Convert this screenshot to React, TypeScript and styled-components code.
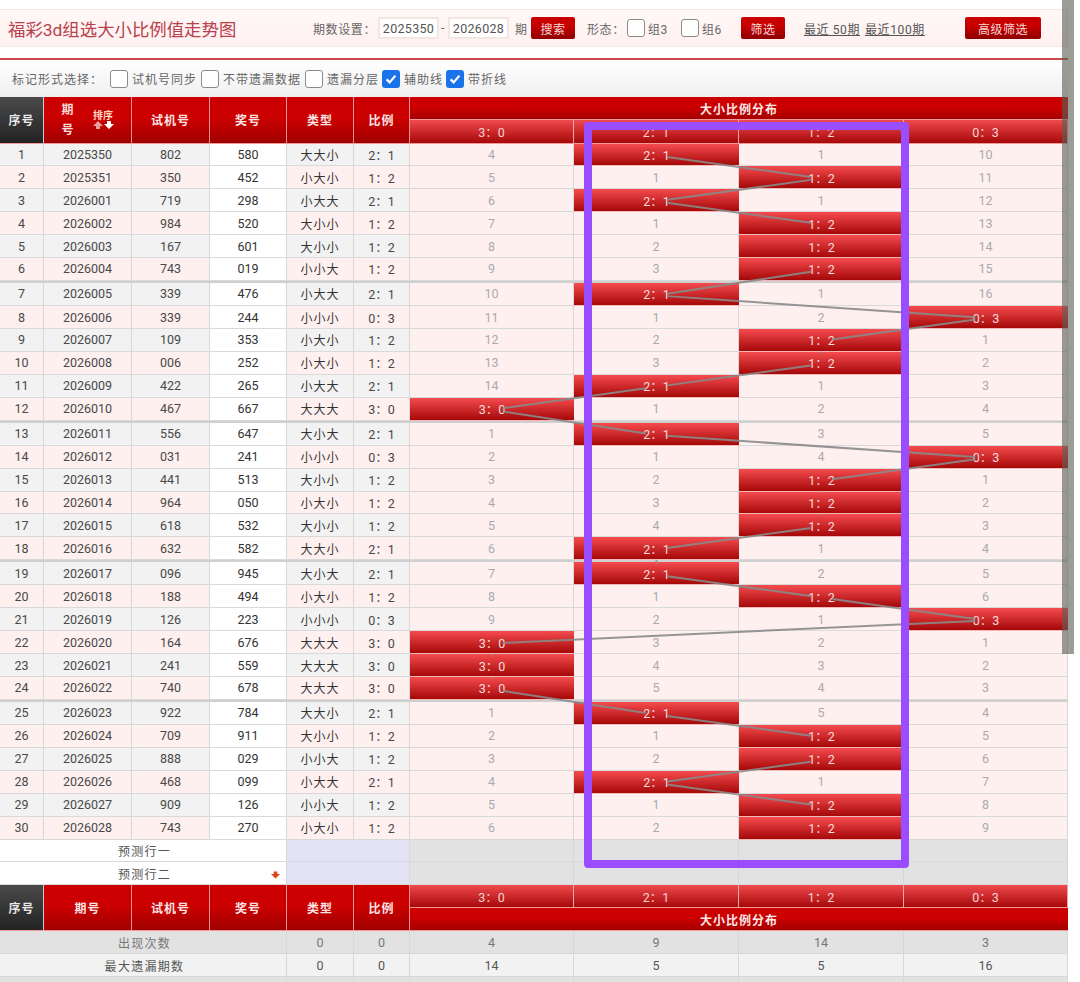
import React from "react";
import styled, { createGlobalStyle, css } from "styled-components";

const GlobalStyle = createGlobalStyle`
  html, body { margin: 0; padding: 0; background: #fff; height: 982px; overflow: hidden; }
  * { box-sizing: border-box; }
  body { font-family: Roboto, "Noto Sans CJK SC", sans-serif; }
`;

const COLS = "44px 88px 78px 77px 67px 56px 164px 165px 165px 164px";
const ROW_H = 22.92;
const SEP_EXTRA = 2.2;
const COL_CENTERS = [492, 656.5, 821.5, 986];
const LABELS = ["3：0", "2：1", "1：2", "0：3"];

type Raw = [string, string, string, string];
const RAW: Raw[] = [
  ["2025350", "802", "580", "大大小"], ["2025351", "350", "452", "小大小"], ["2026001", "719", "298", "小大大"],
  ["2026002", "984", "520", "大小小"], ["2026003", "167", "601", "大小小"], ["2026004", "743", "019", "小小大"],
  ["2026005", "339", "476", "小大大"], ["2026006", "339", "244", "小小小"], ["2026007", "109", "353", "小大小"],
  ["2026008", "006", "252", "小大小"], ["2026009", "422", "265", "小大大"], ["2026010", "467", "667", "大大大"],
  ["2026011", "556", "647", "大小大"], ["2026012", "031", "241", "小小小"], ["2026013", "441", "513", "大小小"],
  ["2026014", "964", "050", "小大小"], ["2026015", "618", "532", "大小小"], ["2026016", "632", "582", "大大小"],
  ["2026017", "096", "945", "大小大"], ["2026018", "188", "494", "小大小"], ["2026019", "126", "223", "小小小"],
  ["2026020", "164", "676", "大大大"], ["2026021", "241", "559", "大大大"], ["2026022", "740", "678", "大大大"],
  ["2026023", "922", "784", "大大小"], ["2026024", "709", "911", "大小小"], ["2026025", "888", "029", "小小大"],
  ["2026026", "468", "099", "小大大"], ["2026027", "909", "126", "小小大"], ["2026028", "743", "270", "小大小"],
];

const counters = [3, 0, 0, 9];
const ROWS = RAW.map((r, i) => {
  const big = [...r[3]].filter((c) => c === "大").length;
  const hit = 3 - big;
  const cells = counters.map((_, k) => {
    if (k === hit) { counters[k] = 0; return LABELS[k]; }
    counters[k] += 1;
    return String(counters[k]);
  });
  return { seq: i + 1, issue: r[0], test: r[1], prize: r[2], type: r[3], ratio: LABELS[hit], hit, cells, sep: i > 0 && i % 6 === 0 };
});

let cursor = 0;
const POINTS = ROWS.map((r) => {
  const top = cursor;
  const h = ROW_H + (r.sep ? SEP_EXTRA : 0);
  cursor += h;
  const y = r.sep ? top + 2.6 + (h - 2.6) / 2 : top + h / 2;
  return { x: COL_CENTERS[r.hit] - 410, y };
});

const SEGMENTS = POINTS.slice(1).map((p, i) => {
  const a = POINTS[i];
  const dx = p.x - a.x;
  const dy = p.y - a.y;
  const len = Math.hypot(dx, dy);
  const k = 10.8 / len;
  return { x1: a.x + dx * k, y1: a.y + dy * k, x2: p.x - dx * k, y2: p.y - dy * k };
});

const Page = styled.div`
  position: relative;
  width: 1080px;
  height: 982px;
  overflow: hidden;
  background: #fff;
  padding-top: 9px;
`;

const Content = styled.div`
  width: 1068px;
`;

const TopBar = styled.div`
  height: 38px;
  display: flex;
  align-items: center;
  background: linear-gradient(#fff8f8, #fff0f0);
  border: 1px solid #f4e6e6;
  border-left: none;
  color: #666;
  font-size: 12px;
  letter-spacing: 0.6px;
`;

const Title = styled.h1`
  margin: 0 0 0 8px;
  width: 305px;
  font-size: 17.4px;
  font-weight: 400;
  color: #b8404a;
  letter-spacing: 0;
  white-space: nowrap;
`;

const Item = styled.span<{ $w?: number; $ml?: number }>`
  margin-left: ${(p) => p.$ml ?? 0}px;
  ${(p) => p.$w && css`width: ${p.$w}px;`}
  white-space: nowrap;
`;

const NumberBox = styled.span`
  width: 61px;
  height: 22px;
  display: flex;
  align-items: center;
  justify-content: center;
  background: #fff;
  border: 2px solid #f5e6e6;
  color: #555;
  font-size: 12.5px;
  letter-spacing: 0.3px;
`;

const RedButton = styled.span<{ $w: number; $ml: number }>`
  width: ${(p) => p.$w}px;
  margin-left: ${(p) => p.$ml}px;
  height: 22px;
  flex: none;
  display: flex;
  align-items: center;
  justify-content: center;
  background: linear-gradient(#c80000 40%, #8e0000);
  border-radius: 2px;
  color: #f6d9d9;
  font-size: 12px;
  letter-spacing: 0.5px;
  white-space: nowrap;
`;

const QuickLink = styled.span<{ $ml: number; $w: number }>`
  margin-left: ${(p) => p.$ml}px;
  width: ${(p) => p.$w}px;
  flex: none;
  color: #555;
  font-size: 12px;
  letter-spacing: 0.6px;
  text-decoration: underline;
  white-space: nowrap;
`;

const RedRule = styled.div`
  height: 2px;
  margin-top: 11px;
  background: #c9484c;
`;

const OptionBar = styled.div`
  height: 37px;
  display: flex;
  align-items: center;
  padding-left: 12px;
  background: linear-gradient(#fff, #efefef);
  color: #666;
  font-size: 12px;
  letter-spacing: 1px;
`;

const OptionLabel = styled.span<{ $w: number }>`
  width: ${(p) => p.$w}px;
  margin-left: 4px;
  white-space: nowrap;
`;

const CheckBox = styled.span<{ $checked?: boolean; $ml?: number }>`
  flex: none;
  width: 18px;
  height: 18px;
  margin-left: ${(p) => p.$ml ?? 0}px;
  border-radius: 3px;
  display: flex;
  align-items: center;
  justify-content: center;
  background: ${(p) => (p.$checked ? "#1a73e8" : "#fff")};
  border: ${(p) => (p.$checked ? "none" : "1.5px solid #8a8a8a")};
`;

const Tick = () => (
  <svg width="14" height="14" viewBox="0 0 14 14" fill="none" stroke="#fff" strokeWidth="2.2">
    <path d="M2.6 7.4 5.6 10.4 11.4 3.6" />
  </svg>
);

const Box = ({ checked, ml }: { checked?: boolean; ml?: number }) => (
  <CheckBox $checked={checked} $ml={ml}>{checked ? <Tick /> : null}</CheckBox>
);

const HeadGrid = styled.div<{ $h: number }>`
  display: grid;
  grid-template-columns: ${COLS};
  grid-template-rows: 1fr 1fr;
  height: ${(p) => p.$h}px;
`;

const headCell = css`
  display: flex;
  align-items: center;
  justify-content: center;
  grid-row: 1 / span 2;
  border-right: 1px solid #ef8f8f;
  border-bottom: 1px solid #ef9a9a;
  color: #fbe4e4;
  font-size: 12px;
  font-weight: 700;
  letter-spacing: 1px;
`;

const HeadCell = styled.div`
  ${headCell}
  background: linear-gradient(#cc0000 45%, #a00000);
`;

const SeqHead = styled.div`
  ${headCell}
  background: linear-gradient(#4a4a4a, #232323);
  border-right-color: #ccc;
  color: #e8e8e8;
`;

const IssueHead = styled(HeadCell)`
  gap: 18px;
`;

const StackedTitle = styled.span`
  display: flex;
  flex-direction: column;
  gap: 8px;
  width: 13px;
  line-height: 12px;
  color: #fbdede;
`;

const SortBlock = styled.span`
  display: flex;
  flex-direction: column;
  align-items: center;
  gap: 0;
  font-size: 10px;
  font-weight: 700;
  line-height: 11px;
  letter-spacing: 0;
  color: #ffd9c4;
`;

const SortArrows = styled.span`
  display: flex;
  gap: 1px;
`;

const BandHead = styled.div<{ $row: number }>`
  grid-column: 7 / span 4;
  grid-row: ${(p) => p.$row};
  display: flex;
  align-items: center;
  justify-content: center;
  background: linear-gradient(#cc0000 45%, #a40000);
  border-bottom: 1px solid #ef9a9a;
  color: #fbe8e8;
  font-size: 12px;
  font-weight: 700;
  letter-spacing: 1px;
`;

const RatioHead = styled.div<{ $row: number }>`
  grid-row: ${(p) => p.$row};
  display: flex;
  align-items: center;
  justify-content: center;
  background: linear-gradient(#f04a4e, #a60808);
  border-right: 1px solid #f0a6a6;
  border-bottom: 1px solid #ef9a9a;
  color: #f7d3d3;
  font-size: 12.5px;
`;

const RowsArea = styled.div`
  position: relative;
`;

const Row = styled.div<{ $sep?: boolean }>`
  display: grid;
  grid-template-columns: ${COLS};
  height: ${(p) => ROW_H + (p.$sep ? SEP_EXTRA : 0)}px;
  ${(p) => p.$sep && css`border-top: 2.6px solid #cfcfcf;`}
`;

const Cell = styled.div<{ $bg: string; $color?: string; $span?: number }>`
  display: flex;
  align-items: center;
  justify-content: center;
  min-width: 0;
  ${(p) => p.$span && css`grid-column: span ${p.$span};`}
  background: ${(p) => p.$bg};
  color: ${(p) => p.$color ?? "#484848"};
  border-right: 1px solid #d7d7d7;
  border-bottom: 1px solid #d9d9d9;
  font-size: 12.5px;
  white-space: nowrap;
`;

const HitCell = styled.div`
  display: flex;
  align-items: center;
  justify-content: center;
  background: linear-gradient(#f54b4f, #a50808);
  border-bottom: 1px solid #f3b8b8;
  color: #f8dcdc;
  font-size: 12.5px;
`;

const TypeText = styled.span`
  font-size: 12px;
  letter-spacing: 1px;
  color: #333;
`;

const TrendSvg = styled.svg`
  position: absolute;
  left: 410px;
  top: 0;
  pointer-events: none;
`;

const LabelCell = styled(Cell)`
  grid-column: span 4;
  position: relative;
  padding-left: 3px;
  letter-spacing: 1.3px;
  font-size: 12px;
`;

const MiniArrow = styled.svg`
  position: absolute;
  right: 6px;
  top: 9px;
`;

const Scrollbar = styled.div`
  position: absolute;
  left: 1062px;
  top: 0;
  width: 12px;
  height: 654px;
  background: rgba(92, 96, 86, 0.62);
`;

const Highlight = styled.div`
  position: absolute;
  left: 584px;
  top: 122px;
  width: 325px;
  height: 746px;
  border: 8px solid #9a4cff;
  border-radius: 4px;
`;

const Arrow = ({ up, color }: { up?: boolean; color: string }) => (
  <svg width="10" height="8" viewBox="0 0 10 8" fill={color}>
    {up ? <path d="M5 0 10 5H7V8H3V5H0Z" /> : <path d="M5 8 0 3H3V0H7V3H10Z" />}
  </svg>
);

const pad = (i: number) => (i % 2 === 0 ? "#f2f2f2" : "#fff0f0");

const FootHeader = () => (
  <HeadGrid $h={46}>
    <SeqHead>序号</SeqHead>
    <HeadCell>期号</HeadCell>
    <HeadCell>试机号</HeadCell>
    <HeadCell>奖号</HeadCell>
    <HeadCell>类型</HeadCell>
    <HeadCell>比例</HeadCell>
    {LABELS.map((l) => <RatioHead key={l} $row={1}>{l}</RatioHead>)}
    <BandHead $row={2}>大小比例分布</BandHead>
  </HeadGrid>
);

const StatRow = ({ label, bg, color, values }: { label: string; bg: string; color: string; values: string[] }) => (
  <Row>
    <LabelCell $bg={bg} $color={color}>{label}</LabelCell>
    {values.map((v, i) => <Cell key={i} $bg={bg} $color={color}>{v}</Cell>)}
  </Row>
);

const ForecastRow = ({ label, arrow }: { label: string; arrow?: boolean }) => (
  <Row>
    <LabelCell $bg="#fff" $color="#555">
      {label}
      {arrow ? (
        <MiniArrow width="9" height="8" viewBox="0 0 10 8" fill="#d9431e">
          <path d="M5 8 0 3H3V0H7V3H10Z" />
        </MiniArrow>
      ) : null}
    </LabelCell>
    <Cell $span={2} $bg="#e2e2f4" />
    {[0, 1, 2, 3].map((k) => <Cell key={k} $bg="#e2e2e2" />)}
  </Row>
);

export default function App() {
  return (
    <Page>
      <GlobalStyle />
      <Content>
        <TopBar>
          <Title>福彩3d组选大小比例值走势图</Title>
          <Item $w={65}>期数设置：</Item>
          <NumberBox>2025350</NumberBox>
          <Item $ml={2} $w={7}>-</Item>
          <NumberBox>2026028</NumberBox>
          <Item $ml={6} $w={16}>期</Item>
          <RedButton $w={44} $ml={0}>搜索</RedButton>
          <Item $ml={12} $w={40}>形态：</Item>
          <Box />
          <Item $ml={3} $w={33}>组3</Item>
          <Box />
          <Item $ml={3} $w={39}>组6</Item>
          <RedButton $w={44} $ml={0}>筛选</RedButton>
          <QuickLink $ml={19} $w={57}>最近 50期</QuickLink>
          <QuickLink $ml={4} $w={61}>最近100期</QuickLink>
          <RedButton $w={76} $ml={39}>高级筛选</RedButton>
        </TopBar>
        <RedRule />
        <OptionBar>
          <Item $w={98}>标记形式选择：</Item>
          <Box />
          <OptionLabel $w={69}>试机号同步</OptionLabel>
          <Box />
          <OptionLabel $w={82}>不带遗漏数据</OptionLabel>
          <Box />
          <OptionLabel $w={55}>遗漏分层</OptionLabel>
          <Box checked />
          <OptionLabel $w={42}>辅助线</OptionLabel>
          <Box checked />
          <OptionLabel $w={44}>带折线</OptionLabel>
        </OptionBar>

        <HeadGrid $h={46.5}>
          <SeqHead>序号</SeqHead>
          <IssueHead>
            <StackedTitle><span>期</span><span>号</span></StackedTitle>
            <SortBlock>
              排序
              <SortArrows><Arrow up color="#e9a0a0" /><Arrow color="#fff" /></SortArrows>
            </SortBlock>
          </IssueHead>
          <HeadCell>试机号</HeadCell>
          <HeadCell>奖号</HeadCell>
          <HeadCell>类型</HeadCell>
          <HeadCell>比例</HeadCell>
          <BandHead $row={1}>大小比例分布</BandHead>
          {LABELS.map((l) => <RatioHead key={l} $row={2}>{l}</RatioHead>)}
        </HeadGrid>

        <RowsArea>
          {ROWS.map((r, i) => (
            <Row key={r.seq} $sep={r.sep}>
              <Cell $bg={pad(i)}>{r.seq}</Cell>
              <Cell $bg={pad(i)}>{r.issue}</Cell>
              <Cell $bg={pad(i)}>{r.test}</Cell>
              <Cell $bg="#fff" $color="#333">{r.prize}</Cell>
              <Cell $bg={pad(i)}><TypeText>{r.type}</TypeText></Cell>
              <Cell $bg={pad(i)}>{r.ratio}</Cell>
              {r.cells.map((c, k) =>
                k === r.hit
                  ? <HitCell key={k}>{c}</HitCell>
                  : <Cell key={k} $bg="#fff0f0" $color="#aaa">{c}</Cell>
              )}
            </Row>
          ))}
          <TrendSvg width="658" height={cursor}>
            {SEGMENTS.map((s, i) => (
              <line key={i} x1={s.x1} y1={s.y1} x2={s.x2} y2={s.y2} stroke="#8a8a8a" strokeOpacity="0.9" strokeWidth="2" />
            ))}
          </TrendSvg>
        </RowsArea>

        <ForecastRow label="预测行一" />
        <ForecastRow label="预测行二" arrow />

        <FootHeader />

        <StatRow label="出现次数" bg="#e2e2e2" color="#777" values={["0", "0", "4", "9", "14", "3"]} />
        <StatRow label="最大遗漏期数" bg="#f2f2f2" color="#555" values={["0", "0", "14", "5", "5", "16"]} />
        <StatRow label="" bg="#e2e2e2" color="#777" values={["", "", "", "", "", ""]} />
      </Content>
      <Highlight />
      <Scrollbar />
    </Page>
  );
}
